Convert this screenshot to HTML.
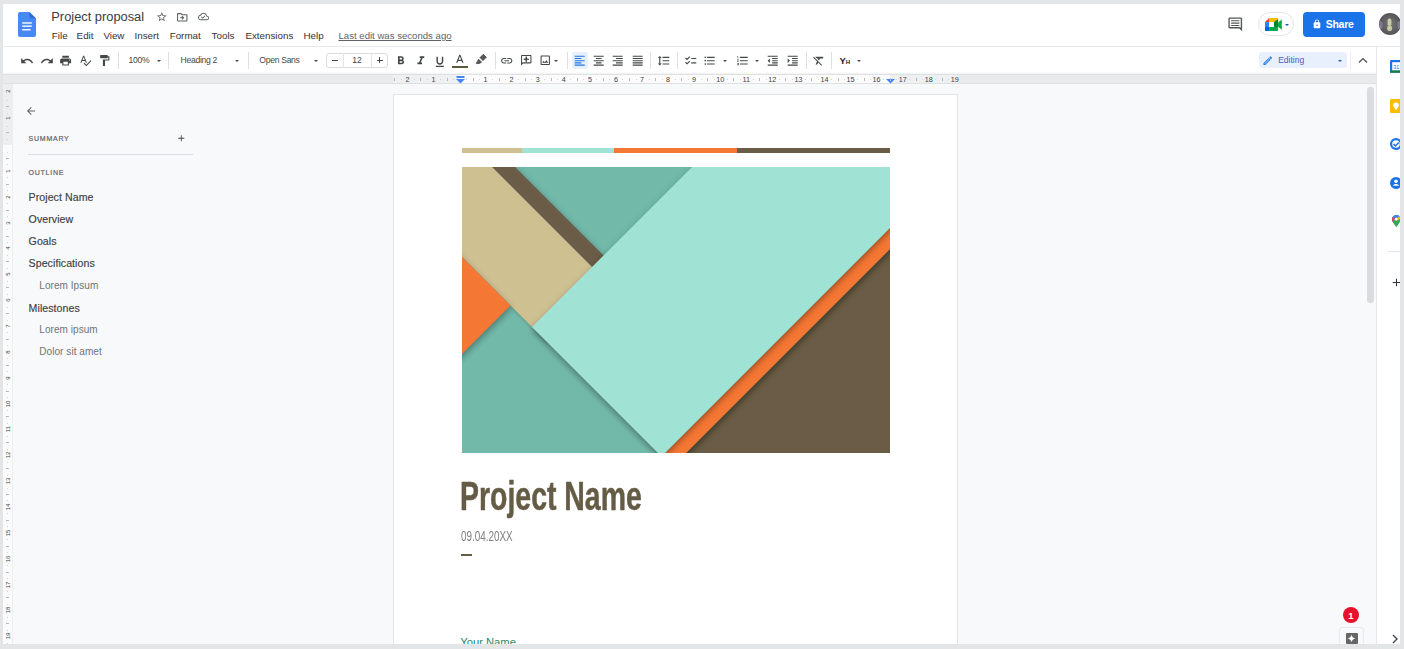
<!DOCTYPE html>
<html><head><meta charset="utf-8">
<style>
*{margin:0;padding:0;box-sizing:border-box}
html,body{width:1404px;height:649px;overflow:hidden;background:#e4e5e7;font-family:"Liberation Sans",sans-serif}
.a{position:absolute}
.t{position:absolute;white-space:nowrap;line-height:1}
svg{display:block;position:absolute}
</style></head><body>
<div class="a" style="left:0;top:0;width:1404px;height:649px;clip-path:inset(4px 4px 5px 3px)">

<div class="a" style="left:3px;top:4px;width:1397px;height:640px;background:#f8f9fa;"></div>
<div class="a" style="left:3px;top:4px;width:1397px;height:42px;background:#fff;"></div>
<div class="a" style="left:3px;top:46px;width:1397px;height:1px;background:#e6e8eb;"></div>
<div class="a" style="left:3px;top:47px;width:1373px;height:27px;background:#fff;"></div>
<div class="a" style="left:3px;top:74px;width:1373px;height:10px;background:#e9eaeb;"></div>
<div class="a" style="left:3px;top:74px;width:1373px;height:1px;background:#dfe0e2;"></div>
<div class="a" style="left:3px;top:83px;width:1373px;height:1px;background:#dfe0e2;"></div>
<div class="a" style="left:3px;top:72px;width:1373px;height:2px;background:linear-gradient(#fff,#f1f2f3);"></div>
<div class="a" style="left:393px;top:75px;width:565px;height:8px;background:#eff0f1;"></div>
<div class="a" style="left:459px;top:75px;width:431px;height:8px;background:#fcfcfc;"></div>
<div class="a" style="left:3px;top:84px;width:9px;height:560px;background:#fbfbfc;"></div>
<div class="a" style="left:12px;top:84px;width:1px;height:560px;background:#eceef0;"></div>
<div class="a" style="left:3px;top:84px;width:9px;height:61px;background:#eceef0;"></div>
<div class="a" style="left:1376px;top:47px;width:24px;height:597px;background:#fff;"></div>
<div class="a" style="left:1376px;top:47px;width:1px;height:597px;background:#e6e8eb;"></div>
<div class="a" style="left:1367px;top:87px;width:7px;height:216px;background:#dadce0;border-radius:3px"></div>
<div class="a" style="left:393px;top:94px;width:565px;height:560px;background:#fff;border:1px solid #e3e5e8"></div>
<svg class="a" style="left:18px;top:12px" width="18" height="25" viewBox="0 0 18 25">
<path d="M2 0H11.4L18 6.6V23a2 2 0 0 1-2 2H2a2 2 0 0 1-2-2V2a2 2 0 0 1 2-2z" fill="#4688f4"/>
<path d="M11.4 0L18 6.6H13.4a2 2 0 0 1-2-2z" fill="#2f6bd9"/>
<rect x="4.2" y="10.2" width="9.6" height="1.5" fill="#f1f6ff"/>
<rect x="4.2" y="13.4" width="9.6" height="1.5" fill="#f1f6ff"/>
<rect x="4.2" y="17.0" width="8.4" height="1.5" fill="#f1f6ff"/>
</svg>
<div class="t" style="left:51.3px;top:10.92px;font-size:12.85px;color:#3a3c3f;font-weight:normal;">Project proposal</div>
<svg class="a" style="left:156.40px;top:11.30px" width="11.6" height="11.6" viewBox="0 0 24 24"><path fill="#5a5e62" d="M22 9.24l-7.19-.62L12 2 9.19 8.63 2 9.24l5.46 4.73L5.82 21 12 17.27 18.18 21l-1.63-7.03L22 9.24zM12 15.4l-3.76 2.27 1-4.28-3.32-2.88 4.38-.38L12 6.1l1.71 4.04 4.38.38-3.32 2.88 1 4.28L12 15.4z"/></svg>
<svg class="a" style="left:176.05px;top:10.55px" width="12.5" height="12.5" viewBox="0 0 24 24"><path fill="#5a5e62" d="M20 6h-8l-2-2H4c-1.1 0-1.99.9-1.99 2L2 18c0 1.1.9 2 2 2h16c1.1 0 2-.9 2-2V8c0-1.1-.9-2-2-2zm0 12H4V6h5.17l2 2H20v10zm-7.84-6H8v2h4.16l-1.59 1.59L11.99 17 16 13.01 11.99 9l-1.41 1.41L12.16 12z"/></svg>
<svg class="a" style="left:197.85px;top:11.35px" width="11.1" height="11.1" viewBox="0 0 24 24"><path fill="#5a5e62" d="M19.35 10.04C18.67 6.59 15.64 4 12 4 9.11 4 6.6 5.64 5.35 8.04 2.34 8.36 0 10.91 0 14c0 3.31 2.69 6 6 6h13c2.76 0 5-2.24 5-5 0-2.64-2.05-4.78-4.650-4.96zM19 18H6c-2.21 0-4-1.79-4-4 0-2.05 1.53-3.76 3.56-3.97l1.07-.11.5-.95C8.08 7.140 9.94 6 12 6c2.62 0 4.88 1.86 5.39 4.43l.3 1.5 1.53.11c1.56.1 2.78 1.41 2.78 2.96 0 1.65-1.35 3-3 3zm-9-3.82l-2.09-2.09L6.5 13.5 10 17l6.01-6.01-1.41-1.41z"/></svg>
<div class="t" style="left:51.8px;top:30.70px;font-size:9.8px;color:#333;font-weight:normal;">File</div>
<div class="t" style="left:76.6px;top:30.70px;font-size:9.8px;color:#333;font-weight:normal;">Edit</div>
<div class="t" style="left:103.4px;top:30.70px;font-size:9.8px;color:#333;font-weight:normal;">View</div>
<div class="t" style="left:134.5px;top:30.70px;font-size:9.8px;color:#333;font-weight:normal;">Insert</div>
<div class="t" style="left:169.7px;top:30.70px;font-size:9.8px;color:#333;font-weight:normal;">Format</div>
<div class="t" style="left:211.6px;top:30.70px;font-size:9.8px;color:#333;font-weight:normal;">Tools</div>
<div class="t" style="left:245.4px;top:30.70px;font-size:9.8px;color:#333;font-weight:normal;">Extensions</div>
<div class="t" style="left:303.5px;top:30.70px;font-size:9.8px;color:#333;font-weight:normal;">Help</div>
<div class="t" style="left:338.5px;top:30.87px;font-size:9.6px;color:#5f6368;font-weight:normal;text-decoration:underline">Last edit was seconds ago</div>
<svg class="a" style="left:1226.75px;top:16.25px" width="16.5" height="16.5" viewBox="0 0 24 24"><path fill="#545759" d="M21.99 4c0-1.1-.89-2-1.99-2H4c-1.1 0-2 .9-2 2v12c0 1.1.9 2 2 2h14l4 4-.01-18zM20 4v13.17L18.83 16H4V4h16zM6 6.2h12v1.5H6zm0 3.4h12v1.5H6zm0 3.4h12v1.5H6z"/></svg>
<div class="a" style="left:1258px;top:12.3px;width:36.3px;height:24px;border:1px solid #e3e5e8;border-radius:12px;background:#fff"></div>
<svg class="a" style="left:1265.1px;top:17.7px" width="16.8" height="13.1" viewBox="0 0 16.8 13.1">
<path d="M0 4.1L4.1 0V4.1z" fill="#ea4335"/>
<path d="M4.1 0H12a1.1 1.1 0 0 1 1.1 1.1V4.1H4.1z" fill="#fbbc04"/>
<path d="M0 4.1H4.1V9H0z" fill="#2684fc"/>
<path d="M0 9H4.1V13.1H1.1A1.1 1.1 0 0 1 0 12z" fill="#0066da"/>
<path d="M4.1 9H13.1V12a1.1 1.1 0 0 1-1.1 1.1H4.1z" fill="#00ac47"/>
<path d="M8.8 4.1L13.1 1.2V9H8.8z" fill="#00832d"/>
<path d="M13.1 4.6L16.8 1.5V11.8L13.1 8.8z" fill="#00ac47"/>
<rect x="4.1" y="4.1" width="4.7" height="4.9" fill="#fff"/>
</svg>
<div class="a" style="left:1285.00px;top:24.05px;width:0;height:0;border-left:2.5px solid transparent;border-right:2.5px solid transparent;border-top:2.5px solid #1a5fb4"></div>
<div class="a" style="left:1303.3px;top:12px;width:61.7px;height:24.7px;background:#1a73e8;border-radius:4px"></div>
<svg class="a" style="left:1311.70px;top:18.70px" width="10" height="10" viewBox="0 0 24 24"><path fill="#fff" d="M18 8h-1V6c0-2.76-2.24-5-5-5S7 3.24 7 6v2H6c-1.1 0-2 .9-2 2v10c0 1.1.9 2 2 2h12c1.1 0 2-.9 2-2V10c0-1.1-.9-2-2-2zm-6 9c-1.1 0-2-.9-2-2s.9-2 2-2 2 .9 2 2-.9 2-2 2zm3.1-9H8.9V6c0-1.71 1.39-3.1 3.1-3.1 1.71 0 3.1 1.39 3.1 3.1v2z"/></svg>
<div class="t" style="left:1325.8px;top:18.71px;font-size:10.5px;color:#fff;font-weight:bold;letter-spacing:-0.3px">Share</div>
<svg class="a" style="left:1378.5px;top:13px" width="22" height="22" viewBox="0 0 22 22">
<defs><radialGradient id="av" cx="50%" cy="50%" r="50%"><stop offset="0" stop-color="#77766f"/><stop offset="1" stop-color="#55545a"/></radialGradient><filter id="avb"><feGaussianBlur stdDeviation="0.6"/></filter></defs>
<circle cx="11" cy="11" r="11" fill="url(#av)"/>
<path d="M0.6 8A11 11 0 0 0 1.5 16.5L3.5 15V9z" fill="#a98ac8" opacity="0.55"/>
<path d="M21.2 8A11 11 0 0 1 20.5 16.5L18.5 15V9z" fill="#a49ad8" opacity="0.5"/>
<g filter="url(#avb)"><rect x="8.6" y="5.5" width="3.8" height="7.5" rx="1.8" fill="#c9ccab"/><ellipse cx="10.6" cy="15.2" rx="2.5" ry="2.8" fill="#c6c9a6"/></g>
</svg>
<svg class="a" style="left:19.80px;top:53.50px" width="14" height="14" viewBox="0 0 24 24"><path fill="#444746" d="M12.5 8c-2.65 0-5.05.99-6.9 2.6L2 7v9h9l-3.62-3.62c1.39-1.16 3.16-1.88 5.12-1.88 3.54 0 6.550 2.31 7.6 5.5l2.37-.78C21.08 11.03 17.15 8 12.5 8z"/></svg>
<svg class="a" style="left:39.50px;top:53.50px" width="14" height="14" viewBox="0 0 24 24"><path fill="#444746" d="M18.4 10.6C16.55 8.99 14.15 8 11.5 8c-4.65 0-8.58 3.03-9.96 7.22L3.9 16c1.05-3.19 4.05-5.5 7.6-5.5 1.95 0 3.730.72 5.12 1.88L13 16h9V7l-3.6 3.6z"/></svg>
<svg class="a" style="left:58.90px;top:53.90px" width="13.2" height="13.2" viewBox="0 0 24 24"><path fill="#444746" d="M19 8H5c-1.66 0-3 1.34-3 3v6h4v4h12v-4h4v-6c0-1.66-1.34-3-3-3zm-3 11H8v-5h8v5zm3-7c-.55 0-1-.45-1-1s.45-1 1-1 1 .45 1 1-.45 1-1 1zm-1-9H6v4h12V3z"/></svg>
<svg class="a" style="left:79.00px;top:54.00px" width="13" height="13" viewBox="0 0 24 24"><path fill="#444746" d="M12.45 16h2.09L9.43 3H7.57L2.46 16h2.09l1.12-3h5.64l1.14 3zm-6.02-5L8.5 5.48 10.57 11H6.43zm15.16.59l-8.09 8.09L9.83 16l-1.41 1.41 5.09 5.09L23 13l-1.41-1.41z"/></svg>
<svg class="a" style="left:98.00px;top:54.00px" width="13" height="13" viewBox="0 0 24 24"><path fill="#444746" d="M18 4V3c0-.55-.45-1-1-1H5c-.55 0-1 .45-1 1v4c0 .55.45 1 1 1h12c.55 0 1-.45 1-1V6h1v4H9v11c0 .55.45 1 1 1h2c.55 0 1-.45 1-1v-9h8V4h-3z"/></svg>
<div class="a" style="left:117.7px;top:52px;width:1px;height:17px;background:#dde0e3;"></div>
<div class="t" style="left:128.5px;top:55.82px;font-size:8.6px;color:#444746;font-weight:normal;letter-spacing:-0.3px">100%</div>
<div class="a" style="left:157.10px;top:59.90px;width:0;height:0;border-left:2.8px solid transparent;border-right:2.8px solid transparent;border-top:2.8px solid #444746"></div>
<div class="a" style="left:168.4px;top:52px;width:1px;height:17px;background:#dde0e3;"></div>
<div class="t" style="left:180.6px;top:55.82px;font-size:8.6px;color:#444746;font-weight:normal;letter-spacing:-0.3px">Heading 2</div>
<div class="a" style="left:234.70px;top:59.90px;width:0;height:0;border-left:2.8px solid transparent;border-right:2.8px solid transparent;border-top:2.8px solid #444746"></div>
<div class="a" style="left:247.8px;top:52px;width:1px;height:17px;background:#dde0e3;"></div>
<div class="t" style="left:259.3px;top:55.82px;font-size:8.6px;color:#444746;font-weight:normal;letter-spacing:-0.3px">Open Sans</div>
<div class="a" style="left:314.00px;top:59.90px;width:0;height:0;border-left:2.8px solid transparent;border-right:2.8px solid transparent;border-top:2.8px solid #444746"></div>
<div class="a" style="left:326.3px;top:52.5px;width:61.6px;height:15.7px;border:1px solid #dadce0;border-radius:3px"></div>
<div class="a" style="left:342.6px;top:52.5px;width:1px;height:15.7px;background:#e3e5e8;"></div>
<div class="a" style="left:370.8px;top:52.5px;width:1px;height:15.7px;background:#e3e5e8;"></div>
<div class="a" style="left:332px;top:59.6px;width:6px;height:1.6px;background:#444746;"></div>
<div class="t" style="left:352.3px;top:56.12px;font-size:8.6px;color:#444746;font-weight:normal;">12</div>
<div class="a" style="left:376.5px;top:59.6px;width:6px;height:1.6px;background:#444746;"></div>
<div class="a" style="left:378.7px;top:57.4px;width:1.6px;height:6px;background:#444746;"></div>
<svg class="a" style="left:393.85px;top:53.65px" width="13.7" height="13.7" viewBox="0 0 24 24"><path fill="#444746" d="M15.6 10.79c.97-.67 1.65-1.77 1.65-2.790 0-2.26-1.75-4-4-4H7v14h7.04c2.09 0 3.71-1.7 3.71-3.79 0-1.52-.86-2.82-2.15-3.42zM10 6.5h3c.83 0 1.5.67 1.5 1.5s-.67 1.5-1.5 1.5h-3v-3zm3.5 9H10v-3h3.5c.83 0 1.5.67 1.5 1.5s-.67 1.5-1.5 1.5z"/></svg>
<svg class="a" style="left:413.55px;top:53.65px" width="13.7" height="13.7" viewBox="0 0 24 24"><path fill="#444746" d="M10 4v3h2.21l-3.42 8H6v3h8v-3h-2.21l3.42-8H18V4z"/></svg>
<svg class="a" style="left:432.85px;top:54.65px" width="13.7" height="13.7" viewBox="0 0 24 24"><path fill="#444746" d="M12 17c3.31 0 6-2.69 6-6V3h-2.5v8c0 1.93-1.57 3.5-3.5 3.5S8.5 12.93 8.5 11V3H6v8c0 3.31 2.69 6 6 6zm-7 2v2h14v-2H5z"/></svg>
<svg class="a" style="left:452.95px;top:52.65px" width="13.7" height="13.7" viewBox="0 0 24 24"><path fill="#444746" d="M11 3L5.5 17h2.25l1.12-3h6.25l1.12 3h2.25L13 3h-2zm-1.38 9L12 5.670 14.38 12H9.62z"/></svg>
<div class="a" style="left:452px;top:66px;width:16px;height:2.4px;background:#5e5a3c;"></div>
<svg class="a" style="left:474px;top:53px" width="14" height="14" viewBox="0 0 14 14"><path d="M9.3 1.3L12.3 4.3 9 7.6 6 4.6z" fill="#555" stroke="#555" stroke-width="0.9" stroke-linejoin="round"/><path d="M2.3 10.6L4.6 6.2 7.6 9.2 5.2 10.5z" fill="#555" stroke="#555" stroke-width="0.9" stroke-linejoin="round"/></svg>
<div class="a" style="left:494.8px;top:52px;width:1px;height:17px;background:#dde0e3;"></div>
<svg class="a" style="left:499.95px;top:53.75px" width="13.5" height="13.5" viewBox="0 0 24 24"><path fill="#444746" d="M3.9 12c0-1.71 1.39-3.1 3.1-3.1h4V7H7c-2.76 0-5 2.24-5 5s2.24 5 5 5h4v-1.9H7c-1.71 0-3.1-1.39-3.1-3.1zM8 13h8v-2H8v2zm9-6h-4v1.9h4c1.71 0 3.1 1.39 3.1 3.1s-1.39 3.1-3.1 3.1h-4V17h4c2.76 0 5-2.24 5-5s-2.24-5-5-5z"/></svg>
<svg class="a" style="left:520.2px;top:54px" width="12.5" height="12.5" viewBox="0 0 24 24"><g transform="translate(24,0) scale(-1,1)"><path fill="#444746" d="M22 4c0-1.1-.9-2-2-2H4c-1.1 0-1.99.9-1.99 2L2 16c0 1.1.9 2 2 2h14l4 4V4zm-2 13.17L18.83 16H4V4h16v13.17zM13 5h-2v4H7v2h4v4h2v-4h4V9h-4z"/></g><path d="M11 5.5h2.2v9H11z M7.6 8.9h9v2.2h-9z" fill="#444746"/></svg>
<svg class="a" style="left:538.95px;top:54.25px" width="12.5" height="12.5" viewBox="0 0 24 24"><path fill="#444746" d="M19 5v14H5V5h14m0-2H5c-1.1 0-2 .9-2 2v14c0 1.1.9 2 2 2h14c1.1 0 2-.9 2-2V5c0-1.1-.9-2-2-2zm-4.86 8.86l-3 3.87L9 13.14 6 17h12l-3.86-5.14z"/></svg>
<div class="a" style="left:554.20px;top:59.90px;width:0;height:0;border-left:2.8px solid transparent;border-right:2.8px solid transparent;border-top:2.8px solid #444746"></div>
<div class="a" style="left:566.6px;top:52px;width:1px;height:17px;background:#dde0e3;"></div>
<div class="a" style="left:571.7px;top:52px;width:16px;height:16.5px;background:#e8f0fe;border-radius:2px"></div>
<svg class="a" style="left:572.70px;top:53.80px" width="13.4" height="13.4" viewBox="0 0 24 24"><path fill="#1a73e8" d="M15 15H3v2h12v-2zm0-8H3v2h12V7zM3 13h18v-2H3v2zm0 8h18v-2H3v2zM3 3v2h18V3H3z"/></svg>
<svg class="a" style="left:591.70px;top:53.80px" width="13.4" height="13.4" viewBox="0 0 24 24"><path fill="#444746" d="M7 15v2h10v-2H7zm-4 6h18v-2H3v2zm0-8h18v-2H3v2zm4-6v2h10V7H7zM3 3v2h18V3H3z"/></svg>
<svg class="a" style="left:610.80px;top:53.80px" width="13.4" height="13.4" viewBox="0 0 24 24"><path fill="#444746" d="M3 21h18v-2H3v2zm6-4h12v-2H9v2zm-6-4h18v-2H3v2zm6-4h12V7H9v2zM3 3v2h18V3H3z"/></svg>
<svg class="a" style="left:630.70px;top:53.80px" width="13.4" height="13.4" viewBox="0 0 24 24"><path fill="#444746" d="M3 21h18v-2H3v2zm0-4h18v-2H3v2zm0-4h18v-2H3v2zm0-4h18V7H3v2zm0-6v2h18V3H3z"/></svg>
<div class="a" style="left:650.3px;top:52px;width:1px;height:17px;background:#dde0e3;"></div>
<svg class="a" style="left:656.50px;top:53.80px" width="13.4" height="13.4" viewBox="0 0 24 24"><path fill="#444746" d="M6 7h2.5L5 3.5 1.5 7H4v10H1.5L5 20.5 8.5 17H6V7zm4-2v2h12V5H10zm0 14h12v-2H10v2zm0-6h12v-2H10v2z"/></svg>
<div class="a" style="left:676.8px;top:52px;width:1px;height:17px;background:#dde0e3;"></div>
<svg class="a" style="left:683.60px;top:53.80px" width="13.4" height="13.4" viewBox="0 0 24 24"><path fill="#444746" d="M22 7h-9v2h9V7zm0 8h-9v2h9v-2zM5.54 11L2 7.46l1.41-1.41 2.12 2.12 4.24-4.24 1.41 1.41L5.54 11zm0 8L2 15.46l1.41-1.41 2.12 2.12 4.24-4.24 1.41 1.41L5.54 19z"/></svg>
<svg class="a" style="left:703.30px;top:53.80px" width="13.4" height="13.4" viewBox="0 0 24 24"><path fill="#444746" d="M4 10.5c-.83 0-1.5.67-1.5 1.5s.67 1.5 1.5 1.5 1.5-.67 1.5-1.5-.67-1.5-1.5-1.5zm0-6c-.83 0-1.5.67-1.5 1.5S3.17 7.5 4 7.5 5.5 6.83 5.5 6 4.83 4.5 4 4.5zm0 12c-.83 0-1.5.68-1.5 1.5s.68 1.5 1.5 1.5 1.5-.68 1.5-1.5-.67-1.5-1.5-1.5zM7 19h14v-2H7v2zm0-6h14v-2H7v2zm0-8v2h14V5H7z"/></svg>
<div class="a" style="left:722.50px;top:59.90px;width:0;height:0;border-left:2.8px solid transparent;border-right:2.8px solid transparent;border-top:2.8px solid #444746"></div>
<svg class="a" style="left:735.70px;top:53.80px" width="13.4" height="13.4" viewBox="0 0 24 24"><path fill="#444746" d="M2 17h2v.5H3v1h1v.5H2v1h3v-4H2v1zm1-9h1V4H2v1h1v3zm-1 3h1.8L2 13.1v.9h3v-1H3.2L5 10.9V10H2v1zm5-6v2h14V5H7zm0 14h14v-2H7v2zm0-6h14v-2H7v2z"/></svg>
<div class="a" style="left:754.50px;top:59.90px;width:0;height:0;border-left:2.8px solid transparent;border-right:2.8px solid transparent;border-top:2.8px solid #444746"></div>
<svg class="a" style="left:766.30px;top:53.80px" width="13.4" height="13.4" viewBox="0 0 24 24"><path fill="#444746" d="M11 17h10v-2H11v2zm-8-5l4 4V8l-4 4zm0 9h18v-2H3v2zM3 3v2h18V3H3zm8 6h10V7H11v2zm0 4h10v-2H11v2z"/></svg>
<svg class="a" style="left:786.10px;top:53.80px" width="13.4" height="13.4" viewBox="0 0 24 24"><path fill="#444746" d="M3 21h18v-2H3v2zM3 8v8l4-4-4-4zm8 9h10v-2H11v2zM3 3v2h18V3H3zm8 6h10V7H11v2zm0 4h10v-2H11v2z"/></svg>
<div class="a" style="left:805.6px;top:52px;width:1px;height:17px;background:#dde0e3;"></div>
<svg class="a" style="left:811.80px;top:53.80px" width="13.4" height="13.4" viewBox="0 0 24 24"><path fill="#444746" d="M3.27 5L2 6.27l6.97 6.97L6.5 19h3l1.57-3.66L16.73 21 18 19.73 3.55 5.27 3.27 5zM6 5v.18L8.82 8h2.4l-.72 1.68 2.1 2.1L14.21 8H20V5H6z"/></svg>
<div class="a" style="left:831.3px;top:52px;width:1px;height:17px;background:#dde0e3;"></div>
<div class="t" style="left:839.5px;top:56.46px;font-size:9.5px;color:#222;font-weight:bold;">Y<span style="font-size:6px">H</span></div>
<div class="a" style="left:856.70px;top:59.90px;width:0;height:0;border-left:2.8px solid transparent;border-right:2.8px solid transparent;border-top:2.8px solid #444746"></div>
<div class="a" style="left:1258.8px;top:52px;width:88px;height:16.2px;background:#e8f0fe;border-radius:3px"></div>
<svg class="a" style="left:1261.85px;top:54.75px" width="11.5" height="11.5" viewBox="0 0 24 24"><path fill="#1a73e8" d="M3 17.25V21h3.75L17.81 9.94l-3.75-3.75L3 17.25zM5.92 19H5v-.92l9.06-9.06.92.92L5.92 19zM20.71 5.63l-2.34-2.34c-.2-.2-.45-.29-.71-.29s-.51.1-.7.29l-1.83 1.83 3.75 3.75 1.83-1.83c.39-.39.39-1.02 0-1.41z"/></svg>
<div class="t" style="left:1278.2px;top:55.90px;font-size:8.5px;color:#4a5cb8;font-weight:normal;">Editing</div>
<div class="a" style="left:1337.50px;top:59.90px;width:0;height:0;border-left:2.8px solid transparent;border-right:2.8px solid transparent;border-top:2.8px solid #1a5fb4"></div>
<div class="a" style="left:1350px;top:52px;width:1px;height:17px;background:#eceef0;"></div>
<svg class="a" style="left:1358px;top:57px" width="10" height="7" viewBox="0 0 10 7"><path d="M1 5.5L5 1.6 9 5.5" fill="none" stroke="#505356" stroke-width="1.35"/></svg>
<svg class="a" style="left:1389.7px;top:60px" width="12" height="12.7" viewBox="0 0 12 12.7">
<rect x="0" y="0" width="12" height="12.7" rx="1.2" fill="#1a73e8"/>
<rect x="2.2" y="2.2" width="9" height="8.3" fill="#fff"/>
<rect x="0" y="10.5" width="12" height="2.2" fill="#188038"/>
<text x="3.2" y="8.6" font-size="5.5" fill="#1a73e8" font-family="Liberation Sans">31</text>
</svg>
<svg class="a" style="left:1390px;top:98.6px" width="12" height="14" viewBox="0 0 12 14">
<rect x="0" y="0" width="12" height="14" rx="1.3" fill="#fbbc04"/>
<circle cx="6" cy="6.2" r="2.8" fill="#fff"/>
<rect x="4.8" y="8.5" width="2.4" height="2" fill="#fff"/>
</svg>
<svg class="a" style="left:1390.3px;top:138px" width="12" height="12" viewBox="0 0 12 12">
<circle cx="6" cy="6" r="4.9" fill="none" stroke="#1a73e8" stroke-width="2.2"/>
<path d="M3.5 6.2L5.4 8 8.8 4.5" fill="none" stroke="#1a73e8" stroke-width="1.6"/>
</svg>
<svg class="a" style="left:1390px;top:176.5px" width="12" height="12" viewBox="0 0 12 12">
<circle cx="6" cy="6" r="6" fill="#1a73e8"/>
<circle cx="6" cy="4.3" r="1.8" fill="#fff"/>
<path d="M2.8 8.8c.6-1.3 1.8-1.9 3.2-1.9s2.6.6 3.2 1.9z" fill="#fff"/>
</svg>
<svg class="a" style="left:1391.5px;top:215px" width="8.6" height="12" viewBox="0 0 10 14">
<path d="M5 0C2.2 0 0 2.2 0 5c0 3.5 5 9 5 9s5-5.5 5-9c0-2.8-2.2-5-5-5z" fill="#34a853"/>
<path d="M5 0C2.2 0 0 2.2 0 5c0 1 .4 2.1 1 3.1L8.6 1.5C7.7.6 6.4 0 5 0z" fill="#4285f4"/>
<path d="M1 2L3.5 4.5 1 8.1C.4 7.1 0 6 0 5 0 3.9.4 2.9 1 2z" fill="#ea4335"/>
<path d="M8.6 1.5L6 4.1c.6.5.9 1.1.9 1.8l3-1C9.8 3.6 9.4 2.4 8.6 1.5z" fill="#fbbc04"/>
<circle cx="5" cy="5" r="1.7" fill="#fff"/>
</svg>
<div class="a" style="left:1388px;top:251px;width:12px;height:1px;background:#e3e5e8;"></div>
<svg class="a" style="left:1389.80px;top:276.00px" width="13" height="13" viewBox="0 0 24 24"><path fill="#333" d="M19 13h-6v6h-2v-6H5v-2h6V5h2v6h6v2z"/></svg>
<svg class="a" style="left:456px;top:76px" width="9" height="8" viewBox="0 0 9 8"><rect x="0.5" y="0" width="8" height="2" fill="#4285f4"/><path d="M0 3H9L4.5 7.5z" fill="#4285f4"/></svg>
<svg class="a" style="left:886px;top:76px" width="9" height="8" viewBox="0 0 9 8"><path d="M0 3H9L4.5 7.5z" fill="#4285f4"/></svg>
<div class="t" style="left:428.4px;top:76.3px;width:10px;text-align:center;font-size:7.2px;color:#3c4043">1</div>
<div class="t" style="left:402.4px;top:76.3px;width:10px;text-align:center;font-size:7.2px;color:#3c4043">2</div>
<div class="t" style="left:479.6px;top:76.3px;width:12px;text-align:center;font-size:7.2px;color:#3c4043">1</div>
<div class="t" style="left:505.6px;top:76.3px;width:12px;text-align:center;font-size:7.2px;color:#3c4043">2</div>
<div class="t" style="left:531.7px;top:76.3px;width:12px;text-align:center;font-size:7.2px;color:#3c4043">3</div>
<div class="t" style="left:557.8px;top:76.3px;width:12px;text-align:center;font-size:7.2px;color:#3c4043">4</div>
<div class="t" style="left:583.9px;top:76.3px;width:12px;text-align:center;font-size:7.2px;color:#3c4043">5</div>
<div class="t" style="left:609.9px;top:76.3px;width:12px;text-align:center;font-size:7.2px;color:#3c4043">6</div>
<div class="t" style="left:636.0px;top:76.3px;width:12px;text-align:center;font-size:7.2px;color:#3c4043">7</div>
<div class="t" style="left:662.1px;top:76.3px;width:12px;text-align:center;font-size:7.2px;color:#3c4043">8</div>
<div class="t" style="left:688.1px;top:76.3px;width:12px;text-align:center;font-size:7.2px;color:#3c4043">9</div>
<div class="t" style="left:714.2px;top:76.3px;width:12px;text-align:center;font-size:7.2px;color:#3c4043">10</div>
<div class="t" style="left:740.3px;top:76.3px;width:12px;text-align:center;font-size:7.2px;color:#3c4043">11</div>
<div class="t" style="left:766.3px;top:76.3px;width:12px;text-align:center;font-size:7.2px;color:#3c4043">12</div>
<div class="t" style="left:792.4px;top:76.3px;width:12px;text-align:center;font-size:7.2px;color:#3c4043">13</div>
<div class="t" style="left:818.5px;top:76.3px;width:12px;text-align:center;font-size:7.2px;color:#3c4043">14</div>
<div class="t" style="left:844.5px;top:76.3px;width:12px;text-align:center;font-size:7.2px;color:#3c4043">15</div>
<div class="t" style="left:870.6px;top:76.3px;width:12px;text-align:center;font-size:7.2px;color:#3c4043">16</div>
<div class="t" style="left:896.7px;top:76.3px;width:12px;text-align:center;font-size:7.2px;color:#3c4043">17</div>
<div class="t" style="left:922.8px;top:76.3px;width:12px;text-align:center;font-size:7.2px;color:#3c4043">18</div>
<div class="t" style="left:948.8px;top:76.3px;width:12px;text-align:center;font-size:7.2px;color:#3c4043">19</div>
<div class="a" style="left:394.3px;top:77.5px;width:1px;height:3px;background:#b6babf"></div>
<div class="a" style="left:420.4px;top:77.5px;width:1px;height:3px;background:#b6babf"></div>
<div class="a" style="left:446.5px;top:77.5px;width:1px;height:3px;background:#b6babf"></div>
<div class="a" style="left:472.5px;top:77.5px;width:1px;height:3px;background:#b6babf"></div>
<div class="a" style="left:498.6px;top:77.5px;width:1px;height:3px;background:#b6babf"></div>
<div class="a" style="left:524.7px;top:77.5px;width:1px;height:3px;background:#b6babf"></div>
<div class="a" style="left:550.7px;top:77.5px;width:1px;height:3px;background:#b6babf"></div>
<div class="a" style="left:576.8px;top:77.5px;width:1px;height:3px;background:#b6babf"></div>
<div class="a" style="left:602.9px;top:77.5px;width:1px;height:3px;background:#b6babf"></div>
<div class="a" style="left:629.0px;top:77.5px;width:1px;height:3px;background:#b6babf"></div>
<div class="a" style="left:655.0px;top:77.5px;width:1px;height:3px;background:#b6babf"></div>
<div class="a" style="left:681.1px;top:77.5px;width:1px;height:3px;background:#b6babf"></div>
<div class="a" style="left:707.2px;top:77.5px;width:1px;height:3px;background:#b6babf"></div>
<div class="a" style="left:733.2px;top:77.5px;width:1px;height:3px;background:#b6babf"></div>
<div class="a" style="left:759.3px;top:77.5px;width:1px;height:3px;background:#b6babf"></div>
<div class="a" style="left:785.4px;top:77.5px;width:1px;height:3px;background:#b6babf"></div>
<div class="a" style="left:811.4px;top:77.5px;width:1px;height:3px;background:#b6babf"></div>
<div class="a" style="left:837.5px;top:77.5px;width:1px;height:3px;background:#b6babf"></div>
<div class="a" style="left:863.6px;top:77.5px;width:1px;height:3px;background:#b6babf"></div>
<div class="a" style="left:889.7px;top:77.5px;width:1px;height:3px;background:#b6babf"></div>
<div class="a" style="left:915.7px;top:77.5px;width:1px;height:3px;background:#b6babf"></div>
<div class="a" style="left:941.8px;top:77.5px;width:1px;height:3px;background:#b6babf"></div>
<div class="a" style="left:400.8px;top:78.5px;width:1px;height:1.5px;background:#cfd2d6"></div>
<div class="a" style="left:413.9px;top:78.5px;width:1px;height:1.5px;background:#cfd2d6"></div>
<div class="a" style="left:426.9px;top:78.5px;width:1px;height:1.5px;background:#cfd2d6"></div>
<div class="a" style="left:439.9px;top:78.5px;width:1px;height:1.5px;background:#cfd2d6"></div>
<div class="a" style="left:453.0px;top:78.5px;width:1px;height:1.5px;background:#cfd2d6"></div>
<div class="a" style="left:466.0px;top:78.5px;width:1px;height:1.5px;background:#cfd2d6"></div>
<div class="a" style="left:479.1px;top:78.5px;width:1px;height:1.5px;background:#cfd2d6"></div>
<div class="a" style="left:492.1px;top:78.5px;width:1px;height:1.5px;background:#cfd2d6"></div>
<div class="a" style="left:505.1px;top:78.5px;width:1px;height:1.5px;background:#cfd2d6"></div>
<div class="a" style="left:518.2px;top:78.5px;width:1px;height:1.5px;background:#cfd2d6"></div>
<div class="a" style="left:531.2px;top:78.5px;width:1px;height:1.5px;background:#cfd2d6"></div>
<div class="a" style="left:544.2px;top:78.5px;width:1px;height:1.5px;background:#cfd2d6"></div>
<div class="a" style="left:557.3px;top:78.5px;width:1px;height:1.5px;background:#cfd2d6"></div>
<div class="a" style="left:570.3px;top:78.5px;width:1px;height:1.5px;background:#cfd2d6"></div>
<div class="a" style="left:583.3px;top:78.5px;width:1px;height:1.5px;background:#cfd2d6"></div>
<div class="a" style="left:596.4px;top:78.5px;width:1px;height:1.5px;background:#cfd2d6"></div>
<div class="a" style="left:609.4px;top:78.5px;width:1px;height:1.5px;background:#cfd2d6"></div>
<div class="a" style="left:622.4px;top:78.5px;width:1px;height:1.5px;background:#cfd2d6"></div>
<div class="a" style="left:635.5px;top:78.5px;width:1px;height:1.5px;background:#cfd2d6"></div>
<div class="a" style="left:648.5px;top:78.5px;width:1px;height:1.5px;background:#cfd2d6"></div>
<div class="a" style="left:661.5px;top:78.5px;width:1px;height:1.5px;background:#cfd2d6"></div>
<div class="a" style="left:674.6px;top:78.5px;width:1px;height:1.5px;background:#cfd2d6"></div>
<div class="a" style="left:687.6px;top:78.5px;width:1px;height:1.5px;background:#cfd2d6"></div>
<div class="a" style="left:700.6px;top:78.5px;width:1px;height:1.5px;background:#cfd2d6"></div>
<div class="a" style="left:713.7px;top:78.5px;width:1px;height:1.5px;background:#cfd2d6"></div>
<div class="a" style="left:726.7px;top:78.5px;width:1px;height:1.5px;background:#cfd2d6"></div>
<div class="a" style="left:739.8px;top:78.5px;width:1px;height:1.5px;background:#cfd2d6"></div>
<div class="a" style="left:752.8px;top:78.5px;width:1px;height:1.5px;background:#cfd2d6"></div>
<div class="a" style="left:765.8px;top:78.5px;width:1px;height:1.5px;background:#cfd2d6"></div>
<div class="a" style="left:778.9px;top:78.5px;width:1px;height:1.5px;background:#cfd2d6"></div>
<div class="a" style="left:791.9px;top:78.5px;width:1px;height:1.5px;background:#cfd2d6"></div>
<div class="a" style="left:804.9px;top:78.5px;width:1px;height:1.5px;background:#cfd2d6"></div>
<div class="a" style="left:818.0px;top:78.5px;width:1px;height:1.5px;background:#cfd2d6"></div>
<div class="a" style="left:831.0px;top:78.5px;width:1px;height:1.5px;background:#cfd2d6"></div>
<div class="a" style="left:844.0px;top:78.5px;width:1px;height:1.5px;background:#cfd2d6"></div>
<div class="a" style="left:857.1px;top:78.5px;width:1px;height:1.5px;background:#cfd2d6"></div>
<div class="a" style="left:870.1px;top:78.5px;width:1px;height:1.5px;background:#cfd2d6"></div>
<div class="a" style="left:883.1px;top:78.5px;width:1px;height:1.5px;background:#cfd2d6"></div>
<div class="a" style="left:896.2px;top:78.5px;width:1px;height:1.5px;background:#cfd2d6"></div>
<div class="a" style="left:909.2px;top:78.5px;width:1px;height:1.5px;background:#cfd2d6"></div>
<div class="a" style="left:922.2px;top:78.5px;width:1px;height:1.5px;background:#cfd2d6"></div>
<div class="a" style="left:935.3px;top:78.5px;width:1px;height:1.5px;background:#cfd2d6"></div>
<div class="a" style="left:948.3px;top:78.5px;width:1px;height:1.5px;background:#cfd2d6"></div>
<div class="t" style="left:3.5px;top:88px;width:8px;text-align:center;font-size:6px;color:#3c4043;transform:rotate(-90deg)">2</div>
<div class="t" style="left:3.5px;top:115px;width:8px;text-align:center;font-size:6px;color:#3c4043;transform:rotate(-90deg)">1</div>
<div class="t" style="left:3.5px;top:167.8px;width:8px;text-align:center;font-size:6px;color:#3c4043;transform:rotate(-90deg)">1</div>
<div class="t" style="left:3.5px;top:193.7px;width:8px;text-align:center;font-size:6px;color:#3c4043;transform:rotate(-90deg)">2</div>
<div class="t" style="left:3.5px;top:219.6px;width:8px;text-align:center;font-size:6px;color:#3c4043;transform:rotate(-90deg)">3</div>
<div class="t" style="left:3.5px;top:245.4px;width:8px;text-align:center;font-size:6px;color:#3c4043;transform:rotate(-90deg)">4</div>
<div class="t" style="left:3.5px;top:271.2px;width:8px;text-align:center;font-size:6px;color:#3c4043;transform:rotate(-90deg)">5</div>
<div class="t" style="left:3.5px;top:297.1px;width:8px;text-align:center;font-size:6px;color:#3c4043;transform:rotate(-90deg)">6</div>
<div class="t" style="left:3.5px;top:323.0px;width:8px;text-align:center;font-size:6px;color:#3c4043;transform:rotate(-90deg)">7</div>
<div class="t" style="left:3.5px;top:348.8px;width:8px;text-align:center;font-size:6px;color:#3c4043;transform:rotate(-90deg)">8</div>
<div class="t" style="left:3.5px;top:374.6px;width:8px;text-align:center;font-size:6px;color:#3c4043;transform:rotate(-90deg)">9</div>
<div class="t" style="left:3.5px;top:400.5px;width:8px;text-align:center;font-size:6px;color:#3c4043;transform:rotate(-90deg)">10</div>
<div class="t" style="left:3.5px;top:426.4px;width:8px;text-align:center;font-size:6px;color:#3c4043;transform:rotate(-90deg)">11</div>
<div class="t" style="left:3.5px;top:452.2px;width:8px;text-align:center;font-size:6px;color:#3c4043;transform:rotate(-90deg)">12</div>
<div class="t" style="left:3.5px;top:478.1px;width:8px;text-align:center;font-size:6px;color:#3c4043;transform:rotate(-90deg)">13</div>
<div class="t" style="left:3.5px;top:503.9px;width:8px;text-align:center;font-size:6px;color:#3c4043;transform:rotate(-90deg)">14</div>
<div class="t" style="left:3.5px;top:529.8px;width:8px;text-align:center;font-size:6px;color:#3c4043;transform:rotate(-90deg)">15</div>
<div class="t" style="left:3.5px;top:555.6px;width:8px;text-align:center;font-size:6px;color:#3c4043;transform:rotate(-90deg)">16</div>
<div class="t" style="left:3.5px;top:581.5px;width:8px;text-align:center;font-size:6px;color:#3c4043;transform:rotate(-90deg)">17</div>
<div class="t" style="left:3.5px;top:607.3px;width:8px;text-align:center;font-size:6px;color:#3c4043;transform:rotate(-90deg)">18</div>
<div class="t" style="left:3.5px;top:633.2px;width:8px;text-align:center;font-size:6px;color:#3c4043;transform:rotate(-90deg)">19</div>
<div class="a" style="left:6.5px;top:99.8px;width:1.5px;height:1px;background:#cfd2d6"></div>
<div class="a" style="left:5.5px;top:106.2px;width:3px;height:1px;background:#b6babf"></div>
<div class="a" style="left:6.5px;top:112.7px;width:1.5px;height:1px;background:#cfd2d6"></div>
<div class="a" style="left:6.5px;top:125.6px;width:1.5px;height:1px;background:#cfd2d6"></div>
<div class="a" style="left:5.5px;top:132.1px;width:3px;height:1px;background:#b6babf"></div>
<div class="a" style="left:6.5px;top:138.5px;width:1.5px;height:1px;background:#cfd2d6"></div>
<div class="a" style="left:6.5px;top:151.5px;width:1.5px;height:1px;background:#cfd2d6"></div>
<div class="a" style="left:5.5px;top:157.9px;width:3px;height:1px;background:#b6babf"></div>
<div class="a" style="left:6.5px;top:164.4px;width:1.5px;height:1px;background:#cfd2d6"></div>
<div class="a" style="left:6.5px;top:177.3px;width:1.5px;height:1px;background:#cfd2d6"></div>
<div class="a" style="left:5.5px;top:183.8px;width:3px;height:1px;background:#b6babf"></div>
<div class="a" style="left:6.5px;top:190.2px;width:1.5px;height:1px;background:#cfd2d6"></div>
<div class="a" style="left:6.5px;top:203.2px;width:1.5px;height:1px;background:#cfd2d6"></div>
<div class="a" style="left:5.5px;top:209.6px;width:3px;height:1px;background:#b6babf"></div>
<div class="a" style="left:6.5px;top:216.1px;width:1.5px;height:1px;background:#cfd2d6"></div>
<div class="a" style="left:6.5px;top:229.0px;width:1.5px;height:1px;background:#cfd2d6"></div>
<div class="a" style="left:5.5px;top:235.5px;width:3px;height:1px;background:#b6babf"></div>
<div class="a" style="left:6.5px;top:241.9px;width:1.5px;height:1px;background:#cfd2d6"></div>
<div class="a" style="left:6.5px;top:254.9px;width:1.5px;height:1px;background:#cfd2d6"></div>
<div class="a" style="left:5.5px;top:261.3px;width:3px;height:1px;background:#b6babf"></div>
<div class="a" style="left:6.5px;top:267.8px;width:1.5px;height:1px;background:#cfd2d6"></div>
<div class="a" style="left:6.5px;top:280.7px;width:1.5px;height:1px;background:#cfd2d6"></div>
<div class="a" style="left:5.5px;top:287.2px;width:3px;height:1px;background:#b6babf"></div>
<div class="a" style="left:6.5px;top:293.6px;width:1.5px;height:1px;background:#cfd2d6"></div>
<div class="a" style="left:6.5px;top:306.6px;width:1.5px;height:1px;background:#cfd2d6"></div>
<div class="a" style="left:5.5px;top:313.0px;width:3px;height:1px;background:#b6babf"></div>
<div class="a" style="left:6.5px;top:319.5px;width:1.5px;height:1px;background:#cfd2d6"></div>
<div class="a" style="left:6.5px;top:332.4px;width:1.5px;height:1px;background:#cfd2d6"></div>
<div class="a" style="left:5.5px;top:338.9px;width:3px;height:1px;background:#b6babf"></div>
<div class="a" style="left:6.5px;top:345.3px;width:1.5px;height:1px;background:#cfd2d6"></div>
<div class="a" style="left:6.5px;top:358.3px;width:1.5px;height:1px;background:#cfd2d6"></div>
<div class="a" style="left:5.5px;top:364.7px;width:3px;height:1px;background:#b6babf"></div>
<div class="a" style="left:6.5px;top:371.2px;width:1.5px;height:1px;background:#cfd2d6"></div>
<div class="a" style="left:6.5px;top:384.1px;width:1.5px;height:1px;background:#cfd2d6"></div>
<div class="a" style="left:5.5px;top:390.6px;width:3px;height:1px;background:#b6babf"></div>
<div class="a" style="left:6.5px;top:397.0px;width:1.5px;height:1px;background:#cfd2d6"></div>
<div class="a" style="left:6.5px;top:410.0px;width:1.5px;height:1px;background:#cfd2d6"></div>
<div class="a" style="left:5.5px;top:416.4px;width:3px;height:1px;background:#b6babf"></div>
<div class="a" style="left:6.5px;top:422.9px;width:1.5px;height:1px;background:#cfd2d6"></div>
<div class="a" style="left:6.5px;top:435.8px;width:1.5px;height:1px;background:#cfd2d6"></div>
<div class="a" style="left:5.5px;top:442.3px;width:3px;height:1px;background:#b6babf"></div>
<div class="a" style="left:6.5px;top:448.7px;width:1.5px;height:1px;background:#cfd2d6"></div>
<div class="a" style="left:6.5px;top:461.7px;width:1.5px;height:1px;background:#cfd2d6"></div>
<div class="a" style="left:5.5px;top:468.1px;width:3px;height:1px;background:#b6babf"></div>
<div class="a" style="left:6.5px;top:474.6px;width:1.5px;height:1px;background:#cfd2d6"></div>
<div class="a" style="left:6.5px;top:487.5px;width:1.5px;height:1px;background:#cfd2d6"></div>
<div class="a" style="left:5.5px;top:494.0px;width:3px;height:1px;background:#b6babf"></div>
<div class="a" style="left:6.5px;top:500.4px;width:1.5px;height:1px;background:#cfd2d6"></div>
<div class="a" style="left:6.5px;top:513.4px;width:1.5px;height:1px;background:#cfd2d6"></div>
<div class="a" style="left:5.5px;top:519.8px;width:3px;height:1px;background:#b6babf"></div>
<div class="a" style="left:6.5px;top:526.3px;width:1.5px;height:1px;background:#cfd2d6"></div>
<div class="a" style="left:6.5px;top:539.2px;width:1.5px;height:1px;background:#cfd2d6"></div>
<div class="a" style="left:5.5px;top:545.7px;width:3px;height:1px;background:#b6babf"></div>
<div class="a" style="left:6.5px;top:552.1px;width:1.5px;height:1px;background:#cfd2d6"></div>
<div class="a" style="left:6.5px;top:565.1px;width:1.5px;height:1px;background:#cfd2d6"></div>
<div class="a" style="left:5.5px;top:571.5px;width:3px;height:1px;background:#b6babf"></div>
<div class="a" style="left:6.5px;top:578.0px;width:1.5px;height:1px;background:#cfd2d6"></div>
<div class="a" style="left:6.5px;top:590.9px;width:1.5px;height:1px;background:#cfd2d6"></div>
<div class="a" style="left:5.5px;top:597.4px;width:3px;height:1px;background:#b6babf"></div>
<div class="a" style="left:6.5px;top:603.8px;width:1.5px;height:1px;background:#cfd2d6"></div>
<div class="a" style="left:6.5px;top:616.8px;width:1.5px;height:1px;background:#cfd2d6"></div>
<div class="a" style="left:5.5px;top:623.2px;width:3px;height:1px;background:#b6babf"></div>
<div class="a" style="left:6.5px;top:629.7px;width:1.5px;height:1px;background:#cfd2d6"></div>
<div class="a" style="left:6.5px;top:642.6px;width:1.5px;height:1px;background:#cfd2d6"></div>
<div class="a" style="left:5.5px;top:649.1px;width:3px;height:1px;background:#b6babf"></div>
<div class="a" style="left:6.5px;top:655.5px;width:1.5px;height:1px;background:#cfd2d6"></div>
<div class="a" style="left:6.5px;top:668.5px;width:1.5px;height:1px;background:#cfd2d6"></div>
<div class="a" style="left:5.5px;top:674.9px;width:3px;height:1px;background:#b6babf"></div>
<div class="a" style="left:6.5px;top:681.4px;width:1.5px;height:1px;background:#cfd2d6"></div>
<div class="a" style="left:6.5px;top:694.3px;width:1.5px;height:1px;background:#cfd2d6"></div>
<div class="a" style="left:5.5px;top:700.8px;width:3px;height:1px;background:#b6babf"></div>
<div class="a" style="left:6.5px;top:707.2px;width:1.5px;height:1px;background:#cfd2d6"></div>
<div class="a" style="left:6.5px;top:720.2px;width:1.5px;height:1px;background:#cfd2d6"></div>
<svg class="a" style="left:25.30px;top:104.80px" width="12" height="12" viewBox="0 0 24 24"><path fill="#5f6368" d="M20 11H7.83l5.59-5.59L12 4l-8 8 8 8 1.41-1.41L7.83 13H20v-2z"/></svg>
<div class="t" style="left:28.6px;top:134.97px;font-size:7px;color:#5f6368;font-weight:normal;letter-spacing:0.75px;-webkit-text-stroke:0.2px #5f6368">SUMMARY</div>
<svg class="a" style="left:176.25px;top:133.25px" width="10.5" height="10.5" viewBox="0 0 24 24"><path fill="#444746" d="M19 13h-6v6h-2v-6H5v-2h6V5h2v6h6v2z"/></svg>
<div class="a" style="left:28px;top:154px;width:165px;height:1px;background:#dadce0;"></div>
<div class="t" style="left:28.6px;top:169.07px;font-size:7px;color:#5f6368;font-weight:normal;letter-spacing:0.75px;-webkit-text-stroke:0.2px #5f6368">OUTLINE</div>
<div class="t" style="left:28.6px;top:192.23px;font-size:10.6px;color:#3c4043;font-weight:normal;letter-spacing:0.06px;-webkit-text-stroke:0.15px #3c4043;">Project Name</div>
<div class="t" style="left:28.6px;top:214.33px;font-size:10.6px;color:#3c4043;font-weight:normal;letter-spacing:0.06px;-webkit-text-stroke:0.15px #3c4043;">Overview</div>
<div class="t" style="left:28.6px;top:236.33px;font-size:10.6px;color:#3c4043;font-weight:normal;letter-spacing:0.06px;-webkit-text-stroke:0.15px #3c4043;">Goals</div>
<div class="t" style="left:28.6px;top:258.33px;font-size:10.6px;color:#3c4043;font-weight:normal;letter-spacing:0.06px;-webkit-text-stroke:0.15px #3c4043;">Specifications</div>
<div class="t" style="left:39.3px;top:280.94px;font-size:10.0px;color:#6f7378;font-weight:normal;letter-spacing:0.06px;">Lorem Ipsum</div>
<div class="t" style="left:28.6px;top:302.53px;font-size:10.6px;color:#3c4043;font-weight:normal;letter-spacing:0.06px;-webkit-text-stroke:0.15px #3c4043;">Milestones</div>
<div class="t" style="left:39.3px;top:325.14px;font-size:10.0px;color:#6f7378;font-weight:normal;letter-spacing:0.06px;">Lorem ipsum</div>
<div class="t" style="left:39.3px;top:347.24px;font-size:10.0px;color:#6f7378;font-weight:normal;letter-spacing:0.06px;">Dolor sit amet</div>
<div class="a" style="left:461.5px;top:148px;width:60.5px;height:5px;background:#cfc092;"></div>
<div class="a" style="left:522px;top:148px;width:92px;height:5px;background:#a0e2d3;"></div>
<div class="a" style="left:614px;top:148px;width:123px;height:5px;background:#f47734;"></div>
<div class="a" style="left:737px;top:148px;width:153px;height:5px;background:#6a5c46;"></div>
<svg class="a" style="left:462px;top:167px" width="428" height="286" viewBox="0 0 428 286">
<defs>
<filter id="sh" x="-50%" y="-50%" width="200%" height="200%"><feGaussianBlur stdDeviation="3"/></filter>
<filter id="sh2" x="-50%" y="-50%" width="200%" height="200%"><feGaussianBlur stdDeviation="1.8"/></filter>
<clipPath id="cl"><rect width="428" height="286"/></clipPath>
</defs>
<g clip-path="url(#cl)">
<rect width="428" height="286" fill="#73b9aa"/>
<polygon points="10,-20 33,-20 156.5,103.5 145,115" fill="#000" opacity="0.3" filter="url(#sh)" transform="translate(1.5,3)"/>
<polygon points="10,-20 33,-20 156.5,103.5 145,115" fill="#6a5c46"/>
<polygon points="-20,-20 10,-20 145,115 85,175 -20,70" fill="#000" opacity="0.15" filter="url(#sh2)" transform="translate(0,2)"/>
<polygon points="-20,-20 10,-20 145,115 85,175 -20,70" fill="#cfc092"/>
<polygon points="-20,70 48.5,138.5 -20,207" fill="#000" opacity="0.3" filter="url(#sh)" transform="translate(1,3)"/>
<polygon points="-20,70 48.5,138.5 -20,207" fill="#f47734"/>
<polygon points="450,60 450,305 205,305" fill="#6a5c46"/>
<polygon points="450,39 450,60 205,305 184,305" fill="#000" opacity="0.35" filter="url(#sh)" transform="translate(1,3)"/>
<polygon points="450,39 450,60 205,305 184,305" fill="#f47734"/>
<polygon points="250,-20 450,-20 450,39 199.5,289.5 70,160" fill="#000" opacity="0.35" filter="url(#sh)" transform="translate(0,3)"/>
<polygon points="250,-20 450,-20 450,39 199.5,289.5 70,160" fill="#a0e2d3"/>
</g>
</svg>
<div class="t" style="left:460px;top:475.94px;font-size:40px;color:#655c46;font-weight:bold;transform:scaleX(0.711);transform-origin:0 0;-webkit-text-stroke:0.5px #655c46">Project Name</div>
<div class="t" style="left:461px;top:529.83px;font-size:13.9px;color:#808080;font-weight:normal;transform:scaleX(0.712);transform-origin:0 0">09.04.20XX</div>
<div class="a" style="left:461px;top:554px;width:11px;height:2px;background:#655c46;"></div>
<div class="t" style="left:460.3px;top:637.32px;font-size:11.2px;color:#1f8a6c;font-weight:normal;">Your Name</div>
<div class="a" style="left:1343px;top:607px;width:16px;height:16px;border-radius:50%;background:#e8112d"></div>
<div class="t" style="left:1343px;top:610.5px;width:16px;text-align:center;font-size:9.5px;font-weight:bold;color:#fff">1</div>
<div class="a" style="left:1339px;top:627px;width:25px;height:20px;border:1px solid #e8eaed;border-radius:3px;background:#f8f9fa"></div>
<div class="a" style="left:1345.5px;top:633px;width:12px;height:11px;background:#666;border-radius:1px"></div>
<svg class="a" style="left:1347px;top:634px" width="9" height="9" viewBox="0 0 9 9"><path d="M4.5 0.5Q5 4 8.5 4.5Q5 5 4.5 8.5Q4 5 0.5 4.5Q4 4 4.5 0.5z" fill="#fff"/></svg>
<svg class="a" style="left:1391px;top:634px" width="8" height="10" viewBox="0 0 8 10"><path d="M2 1L6 5 2 9" fill="none" stroke="#444" stroke-width="1.4"/></svg>
</div></body></html>
